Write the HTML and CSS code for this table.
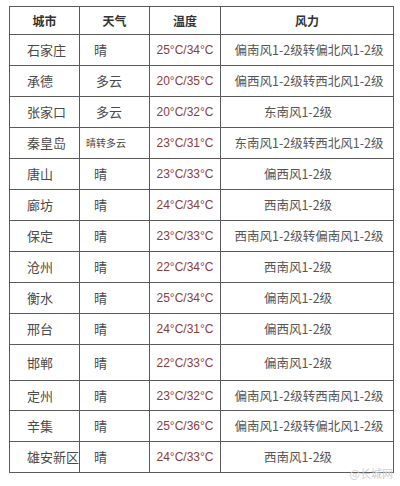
FILE: index.html
```html
<!DOCTYPE html>
<html lang="zh-CN">
<head>
<meta charset="utf-8">
<link rel="stylesheet" href="styles.css">
</head>
<body>
<div class="page">
<table class="weather">
<colgroup><col class="c1"><col class="c2"><col class="c3"><col class="c4"></colgroup>
<thead>
<tr class="head"><th>城市</th><th>天气</th><th>温度</th><th>风力</th></tr>
</thead>
<tbody>
<tr><td class="city">石家庄</td><td class="wx">晴</td><td class="temp">25°C/34°C</td><td class="wind">偏南风1-2级转偏北风1-2级</td></tr>
<tr><td class="city">承德</td><td class="wx wx2">多云</td><td class="temp">20°C/35°C</td><td class="wind">偏西风1-2级转西北风1-2级</td></tr>
<tr><td class="city">张家口</td><td class="wx wx2">多云</td><td class="temp">20°C/32°C</td><td class="wind short">东南风1-2级</td></tr>
<tr><td class="city">秦皇岛</td><td class="wx wx4">晴转多云</td><td class="temp">23°C/31°C</td><td class="wind">东南风1-2级转西北风1-2级</td></tr>
<tr><td class="city">唐山</td><td class="wx">晴</td><td class="temp">23°C/33°C</td><td class="wind short">偏西风1-2级</td></tr>
<tr><td class="city">廊坊</td><td class="wx">晴</td><td class="temp">24°C/34°C</td><td class="wind short">西南风1-2级</td></tr>
<tr><td class="city">保定</td><td class="wx">晴</td><td class="temp">23°C/33°C</td><td class="wind">西南风1-2级转偏南风1-2级</td></tr>
<tr><td class="city">沧州</td><td class="wx">晴</td><td class="temp">22°C/34°C</td><td class="wind short">西南风1-2级</td></tr>
<tr><td class="city">衡水</td><td class="wx">晴</td><td class="temp">25°C/34°C</td><td class="wind short">偏南风1-2级</td></tr>
<tr><td class="city">邢台</td><td class="wx">晴</td><td class="temp">24°C/31°C</td><td class="wind short">偏西风1-2级</td></tr>
<tr class="tall"><td class="city">邯郸</td><td class="wx">晴</td><td class="temp">22°C/33°C</td><td class="wind short">偏南风1-2级</td></tr>
<tr class="thin"><td class="city">定州</td><td class="wx">晴</td><td class="temp">23°C/32°C</td><td class="wind">偏南风1-2级转西南风1-2级</td></tr>
<tr><td class="city">辛集</td><td class="wx">晴</td><td class="temp">25°C/36°C</td><td class="wind">偏南风1-2级转偏北风1-2级</td></tr>
<tr class="last"><td class="city">雄安新区</td><td class="wx">晴</td><td class="temp">24°C/33°C</td><td class="wind short">西南风1-2级</td></tr>
</tbody>
</table>
<div class="mark">@长城网</div>
</div>
</body>
</html>
```

FILE: styles.css
```css
html, body {
  margin: 0;
  padding: 0;
  background: #fff;
}
.page {
  position: relative;
  width: 400px;
  height: 486px;
  padding: 6px 0 0 9px;
  box-sizing: border-box;
  font-family: "Noto Sans CJK SC", "Liberation Sans", sans-serif;
}
.weather {
  border-collapse: collapse;
  table-layout: fixed;
  width: 384px;
  color: #4a4a4a;
  font-size: 13px;
}
.c1 { width: 70px; }
.c2 { width: 70px; }
.c3 { width: 71px; }
.c4 { width: 173px; }
.weather th, .weather td {
  border: 1px solid #5a5a5a;
  padding: 0;
  line-height: 16px;
  white-space: nowrap;
  vertical-align: middle;
}
.weather .head th {
  height: 27px;
  font-size: 12px;
  font-weight: 700;
  color: #333;
  text-align: center;
}
.weather td {
  height: 30px;
}
.weather tr.tall td { height: 35px; }
.weather tr.thin td { height: 29px; }
.weather .city {
  text-align: left;
  padding-left: 17px;
}
.weather .wx {
  text-align: left;
  padding-left: 14px;
}
.weather .wx2 { padding-left: 16px; }
.weather .wx4 {
  font-size: 10px;
  padding-left: 6px;
}
.weather .temp {
  text-align: center;
  font-family: "Liberation Sans", sans-serif;
  font-size: 12px;
  color: #8a3d3d;
}
.weather .wind {
  text-align: center;
  color: #555;
  font-size: 12.5px;
  padding-left: 4px;
}
.weather .wind.short {
  padding-left: 0;
  padding-right: 18px;
}
.mark {
  position: absolute;
  right: 7px;
  bottom: 5px;
  font-size: 11px;
  color: #d0d0d0;
}
```
